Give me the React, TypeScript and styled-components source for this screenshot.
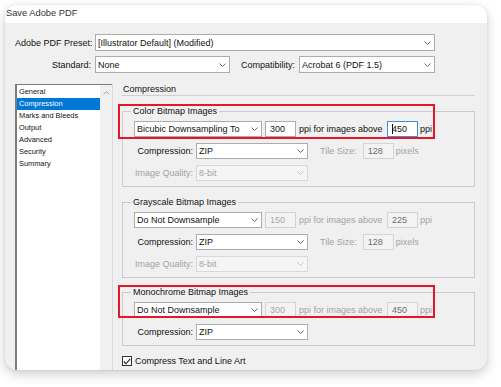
import React from "react";
import styled, { createGlobalStyle, css } from "styled-components";

const GlobalStyle = createGlobalStyle`
  html, body {
    margin: 0;
    padding: 0;
    background: #fff;
  }
  body {
    font-family: "Liberation Sans", Arial, sans-serif;
    font-size: 9px;
    color: #111;
  }
`;

const Stage = styled.div`
  width: 501px;
  height: 387px;
  padding: 5px 0 0 5px;
  box-sizing: border-box;
  overflow: hidden;
  background: #fff;
`;

const Dialog = styled.div`
  width: 482px;
  height: 365px;
  border-radius: 12px;
  overflow: hidden;
  background: #f0f0f0;
  box-shadow: 0 4px 12px rgba(0, 0, 0, 0.2), 0 0 3px rgba(0, 0, 0, 0.08);
  display: flex;
  flex-direction: column;
`;

const TitleBar = styled.div`
  flex: none;
  height: 18px;
  background: #fff;
  font-size: 9.3px;
  line-height: 16px;
  padding-left: 1px;
  color: #333;
  white-space: nowrap;
`;

const Body = styled.div`
  flex: 1;
  min-height: 0;
  display: flex;
  flex-direction: column;
  padding: 11px 0 0 10px;
`;

const FormRow = styled.div<{ $after: number }>`
  display: flex;
  align-items: center;
  height: 17px;
  margin-bottom: ${(p) => p.$after}px;
  flex: none;
`;

const Label = styled.span<{ $width?: number; $off?: boolean }>`
  ${(p) =>
    p.$width !== undefined &&
    css`
      width: ${p.$width}px;
      text-align: right;
      flex: none;
    `}
  color: ${(p) => (p.$off ? "#a3a3a3" : "#111")};
  white-space: nowrap;
`;

const SelectBox = styled.div<{ $width: number; $off?: boolean; $gap?: number }>`
  box-sizing: border-box;
  width: ${(p) => p.$width}px;
  height: 100%;
  margin-left: ${(p) => p.$gap ?? 0}px;
  flex: none;
  display: flex;
  align-items: center;
  justify-content: space-between;
  padding: 0 3px 0 2px;
  border: 1px solid ${(p) => (p.$off ? "#d9d9d9" : "#acacac")};
  background: ${(p) => (p.$off ? "#f5f5f5" : "#fff")};
  color: ${(p) => (p.$off ? "#a3a3a3" : "#111")};
  white-space: nowrap;
  svg polyline {
    stroke: ${(p) => (p.$off ? "#c4c4c4" : "#666")};
  }
`;

const NumBox = styled.div<{ $state?: "focus" | "off" | "dim"; $gap: number }>`
  box-sizing: border-box;
  width: 31px;
  height: 100%;
  margin-left: ${(p) => p.$gap}px;
  flex: none;
  display: flex;
  align-items: center;
  padding-left: 4px;
  border: 1px solid
    ${(p) =>
      p.$state === "focus" ? "#3d8ee0" : p.$state ? "#d4d4d4" : "#acacac"};
  background: ${(p) => (p.$state && p.$state !== "focus" ? "#f3f3f3" : "#fff")};
  color: ${(p) =>
    p.$state === "off" ? "#a8a8a8" : p.$state === "dim" ? "#6d6d6d" : "#111"};
`;

const Caret = styled.span`
  display: inline-block;
  width: 1px;
  height: 10px;
  background: #111;
  margin-right: -1px;
`;

const Spaced = styled.span<{ $gap: number; $width?: number; $off?: boolean }>`
  margin-left: ${(p) => p.$gap}px;
  ${(p) => p.$width !== undefined && `width: ${p.$width}px; flex: none;`}
  color: ${(p) => (p.$off ? "#a3a3a3" : "#111")};
  white-space: nowrap;
`;

const Main = styled.div`
  flex: 1;
  display: flex;
  min-height: 0;
`;

const ListBox = styled.div`
  flex: none;
  width: 97px;
  box-sizing: border-box;
  display: flex;
  border-top: 1px solid #7c7c7c;
  border-left: 2px solid #7c7c7c;
  background: #fff;
`;

const ListItems = styled.div`
  flex: 1;
  padding-top: 1px;
`;

const ListItem = styled.div<{ $selected?: boolean }>`
  height: 12px;
  line-height: 12px;
  padding-left: 2px;
  font-size: 7.4px;
  color: ${(p) => (p.$selected ? "#fff" : "#111")};
  background: ${(p) => (p.$selected ? "#0078d7" : "transparent")};
`;

const ScrollTrack = styled.div`
  flex: none;
  width: 12px;
  background: #f0f0f0;
  display: flex;
  justify-content: center;
  padding-top: 6px;
  box-sizing: border-box;
`;

const Panel = styled.div`
  flex: 1;
  border-left: 1px solid #dadada;
  padding: 0 12px 0 9px;
  display: flex;
  flex-direction: column;
`;

const PanelHeader = styled.div`
  line-height: 11px;
  padding-left: 1px;
  border-bottom: 1px solid #d0d0d0;
`;

const GroupWrap = styled.div<{ $top: number }>`
  position: relative;
  margin-top: ${(p) => p.$top}px;
`;

const Group = styled.fieldset`
  margin: 0;
  min-width: 0;
  padding: 4px 0 5px 11px;
  border: 1px solid #cbcbcb;
  display: flex;
  flex-direction: column;
  gap: 6px;
`;

const Legend = styled.legend`
  padding: 0 2px;
  margin-left: -3px;
  line-height: 12px;
  color: #111;
`;

const FieldRow = styled.div`
  display: flex;
  align-items: center;
  height: 16px;
`;

const Highlight = styled.div<{ $height: number }>`
  position: absolute;
  left: -4px;
  top: -1px;
  width: 317px;
  height: ${(p) => p.$height}px;
  box-sizing: border-box;
  border: 2px solid #e3172b;
  pointer-events: none;
`;

const CheckRow = styled.label`
  display: flex;
  align-items: center;
  margin-top: 9px;
  height: 12px;
`;

const CheckBox = styled.span`
  width: 10px;
  height: 10px;
  box-sizing: border-box;
  border: 1px solid #333;
  background: #fff;
  display: flex;
  align-items: center;
  justify-content: center;
  margin-right: 3px;
`;

const Chevron = () => (
  <svg width="7" height="4" viewBox="0 0 7 4">
    <polyline points="0.5,0.5 3.5,3.5 6.5,0.5" fill="none" strokeWidth="1" />
  </svg>
);

const Select = ({
  width,
  value,
  off,
  gap,
}: {
  width: number;
  value: string;
  off?: boolean;
  gap?: number;
}) => (
  <SelectBox $width={width} $off={off} $gap={gap}>
    <span>{value}</span>
    <Chevron />
  </SelectBox>
);

const sections = [
  "General",
  "Compression",
  "Marks and Bleeds",
  "Output",
  "Advanced",
  "Security",
  "Summary",
];

type SampleRow = {
  method: string;
  ppi: string;
  above: string;
  focus?: boolean;
};

const DownsampleRow = ({ method, ppi, above, focus }: SampleRow) => {
  const off = !focus;
  return (
    <FieldRow>
      <Select width={128} value={method} />
      <NumBox $gap={3} $state={off ? "off" : undefined}>
        {ppi}
      </NumBox>
      <Spaced $gap={3} $width={84} $off={off}>
        ppi for images above
      </Spaced>
      <NumBox $gap={4} $state={off ? "dim" : "focus"}>
        {focus && <Caret />}
        {above}
      </NumBox>
      <Spaced $gap={2} $off={off}>
        ppi
      </Spaced>
    </FieldRow>
  );
};

const CompressionRow = ({ tile }: { tile?: boolean }) => (
  <FieldRow>
    <Label $width={59}>Compression:</Label>
    <Select width={112} value="ZIP" gap={3} />
    {tile && (
      <>
        <Spaced $gap={12} $off>
          Tile Size:
        </Spaced>
        <NumBox $gap={6} $state="dim">
          128
        </NumBox>
        <Spaced $gap={2} $off>
          pixels
        </Spaced>
      </>
    )}
  </FieldRow>
);

const QualityRow = () => (
  <FieldRow>
    <Label $width={59} $off>
      Image Quality:
    </Label>
    <Select width={112} value="8-bit" gap={3} off />
  </FieldRow>
);

export default function App() {
  return (
    <>
      <GlobalStyle />
      <Stage>
        <Dialog>
          <TitleBar>Save Adobe PDF</TitleBar>
          <Body>
            <FormRow $after={5}>
              <Label $width={76}>Adobe PDF Preset:</Label>
              <Select width={340} gap={4} value="[Illustrator Default] (Modified)" />
            </FormRow>
            <FormRow $after={11}>
              <Label $width={76}>Standard:</Label>
              <Select width={135} gap={4} value="None" />
              <Spaced $gap={11} $width={56}>
                Compatibility:
              </Spaced>
              <Select width={136} gap={2} value="Acrobat 6 (PDF 1.5)" />
            </FormRow>
            <Main>
              <ListBox>
                <ListItems>
                  {sections.map((s) => (
                    <ListItem key={s} $selected={s === "Compression"}>
                      {s}
                    </ListItem>
                  ))}
                </ListItems>
                <ScrollTrack>
                  <svg width="7" height="4" viewBox="0 0 7 4">
                    <polyline
                      points="0.5,3.5 3.5,0.5 6.5,3.5"
                      fill="none"
                      stroke="#a6a6a6"
                      strokeWidth="1"
                    />
                  </svg>
                </ScrollTrack>
              </ListBox>
              <Panel>
                <PanelHeader>Compression</PanelHeader>

                <GroupWrap $top={9}>
                  <Group>
                    <Legend>Color Bitmap Images</Legend>
                    <DownsampleRow
                      method="Bicubic Downsampling To"
                      ppi="300"
                      above="450"
                      focus
                    />
                    <CompressionRow tile />
                    <QualityRow />
                  </Group>
                  <Highlight $height={35} />
                </GroupWrap>

                <GroupWrap $top={9}>
                  <Group>
                    <Legend>Grayscale Bitmap Images</Legend>
                    <DownsampleRow method="Do Not Downsample" ppi="150" above="225" />
                    <CompressionRow tile />
                    <QualityRow />
                  </Group>
                </GroupWrap>

                <GroupWrap $top={8}>
                  <Group>
                    <Legend>Monochrome Bitmap Images</Legend>
                    <DownsampleRow method="Do Not Downsample" ppi="300" above="450" />
                    <CompressionRow />
                  </Group>
                  <Highlight $height={33} />
                </GroupWrap>

                <CheckRow>
                  <CheckBox>
                    <svg width="8" height="7" viewBox="0 0 8 7">
                      <polyline
                        points="0.8,3.5 3,5.8 7.2,0.8"
                        fill="none"
                        stroke="#222"
                        strokeWidth="1.1"
                      />
                    </svg>
                  </CheckBox>
                  Compress Text and Line Art
                </CheckRow>
              </Panel>
            </Main>
          </Body>
        </Dialog>
      </Stage>
    </>
  );
}
